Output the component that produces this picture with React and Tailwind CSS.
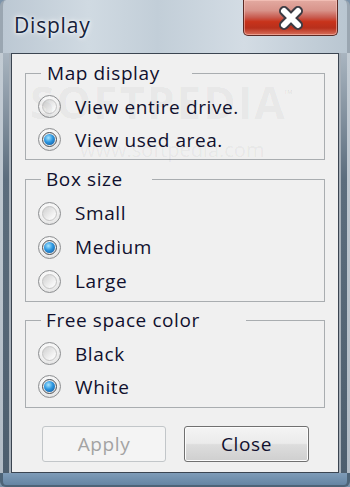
import React from "react";

function Radio({ checked }) {
  return (
    <span className="flex h-[23px] w-[23px] shrink-0 items-center justify-center rounded-full border border-[#8c8e90] bg-[radial-gradient(circle_at_45%_35%,#ffffff_0%,#f2f2f2_50%,#d6d6d6_100%)]">
      <span
        className={
          checked
            ? "flex h-[15px] w-[15px] items-center justify-center rounded-full border border-[#4a4f55] bg-[#e8e8e8]"
            : "flex h-[15px] w-[15px] items-center justify-center rounded-full border border-[#c4c4c4] bg-[linear-gradient(135deg,#cfcfcf,#f4f4f4_70%,#ffffff)]"
        }
      >
        {checked && (
          <span className="h-[11px] w-[11px] rounded-full bg-[radial-gradient(circle_at_40%_35%,#a8e6ff_0%,#2b96e0_45%,#0f4f94_100%)]" />
        )}
      </span>
    </span>
  );
}

function Row({ checked, label, h }) {
  return (
    <div className={"flex items-center pl-[12px] " + h}>
      <Radio checked={checked} />
      <span className="ml-[14px] text-[#10102e]">{label}</span>
    </div>
  );
}

export default function App() {
  return (
    <div
      className="flex h-[487px] w-[350px] flex-col overflow-hidden bg-[#7b93aa] text-[19px] leading-[24px] tracking-[0.6px]"
      style={{ fontFamily: '"Open Sans", "Noto Sans", "Liberation Sans", sans-serif' }}
    >
      {/* title bar */}
      <div className="flex h-[53px] shrink-0 items-start justify-between rounded-t-[6px] border-l-[3px] border-r-[3px] border-[#9aa6b1] bg-[linear-gradient(90deg,#bcc8d3_0%,#d0dae2_25%,#c2ced8_45%,#d3dce4_70%,#b9c6d1_100%)]">
        <div className="pl-[11px] pt-[13px] text-[21px] tracking-[0.8px] text-[#16223a] [text-shadow:0_0_6px_#ffffff,0_0_3px_#ffffff]">
          Display
        </div>
        <div className="mr-[9px] flex h-[36px] w-[95px] items-center justify-center rounded-b-[5px] border border-t-0 border-[#5b2a25] bg-[linear-gradient(180deg,#e3aaa1_0%,#d8938a_30%,#c85a4e_50%,#c8331b_62%,#b8301c_80%,#d8705c_100%)] shadow-[inset_0_0_0_1px_rgba(255,210,200,0.5)]">
          <svg width="32" height="24" viewBox="0 0 32 24">
            <path d="M9 5 L23 19 M23 5 L9 19" stroke="#3c3c44" strokeWidth="10" strokeLinecap="round" />
            <path d="M9 5 L23 19 M23 5 L9 19" stroke="#ffffff" strokeWidth="6" strokeLinecap="round" />
          </svg>
        </div>
      </div>

      {/* middle */}
      <div className="flex flex-1">
        <div className="flex w-[11px] shrink-0">
          <div className="w-[3px] bg-[linear-gradient(180deg,#c3ccd4,#b2bcc6)]" />
          <div className="w-[6px] bg-[linear-gradient(180deg,#a9b5c0_0%,#5c6d7d_30%,#4d5e6e_100%)]" />
          <div className="w-[2px] bg-[#a6afb8]" />
        </div>

        <div className="relative flex flex-1 flex-col border border-[#3b4551] bg-[#f0f0f0]">
          {/* watermark */}
          <div className="pointer-events-none absolute left-[18px] top-[36px] text-[44px] font-bold tracking-[2px] text-[rgba(0,0,0,0.045)]">
            SOFTPEDIA
          </div>
          <div className="pointer-events-none absolute left-[272px] top-[28px] text-[12px] text-[rgba(0,0,0,0.08)]">
            ™
          </div>
          <div className="pointer-events-none absolute left-[68px] top-[84px] text-[20px] tracking-normal text-[rgba(0,0,0,0.05)]">
            www.softpedia.com
          </div>

          <fieldset className="mx-[13px] mt-[7px] border border-[#a9adb0] pb-[3px]">
            <legend className="ml-[15px] w-[151px] pl-[6px] text-[#10102e]">Map display</legend>
            <div className="pt-[5px]">
              <Row label="View entire drive." h="h-[33px]" />
              <Row label="View used area." checked h="h-[33px]" />
            </div>
          </fieldset>

          <fieldset className="mx-[13px] mt-[7px] border border-[#a9adb0] pb-[3px]">
            <legend className="ml-[15px] w-[111px] pl-[5px] text-[#10102e]">Box size</legend>
            <div className="pt-[5px]">
              <Row label="Small" h="h-[34px]" />
              <Row label="Medium" checked h="h-[34px]" />
              <Row label="Large" h="h-[34px]" />
            </div>
          </fieldset>

          <fieldset className="mx-[13px] mt-[6px] border border-[#a9adb0] pb-[4px]">
            <legend className="ml-[15px] w-[205px] pl-[5px] text-[#10102e]">Free space color</legend>
            <div className="pt-[5px]">
              <Row label="Black" h="h-[33px]" />
              <Row label="White" checked h="h-[33px]" />
            </div>
          </fieldset>

          <div className="ml-[30px] mt-[18px] flex gap-[18px]">
            <div className="flex h-[36px] w-[124px] items-center justify-center rounded-[3px] border border-[#c2c6c9] bg-[#f4f4f4] text-[#a3a3a3]">
              Apply
            </div>
            <div className="flex h-[36px] w-[125px] items-center justify-center rounded-[3px] border border-[#707070] bg-[linear-gradient(180deg,#f4f4f4_0%,#ebebeb_48%,#dddddd_52%,#cfcfcf_100%)] text-[#10102e] shadow-[inset_0_0_0_1px_#fcfcfc]">
              Close
            </div>
          </div>
        </div>

        <div className="flex w-[11px] shrink-0">
          <div className="w-[2px] bg-[#a6afb8]" />
          <div className="w-[6px] bg-[linear-gradient(180deg,#a9b5c0_0%,#5c6d7d_30%,#4d5e6e_100%)]" />
          <div className="w-[3px] bg-[linear-gradient(180deg,#c3ccd4,#b2bcc6)]" />
        </div>
      </div>

      {/* bottom frame */}
      <div className="h-[14px] shrink-0 rounded-b-[6px] border-x-[3px] border-b-[2px] border-[#4d6478] bg-[linear-gradient(180deg,#7f9cb8,#6585a3)]" />
    </div>
  );
}
